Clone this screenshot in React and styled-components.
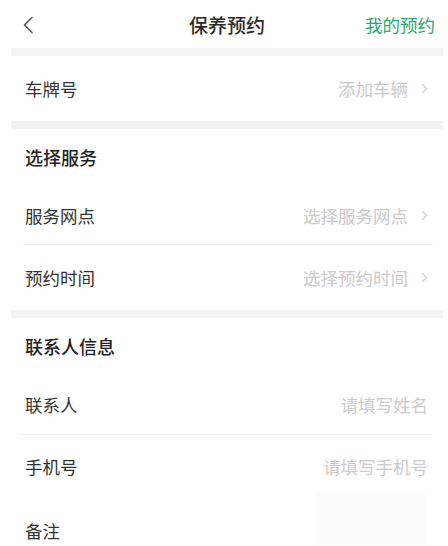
import React from 'react';
import styled, { createGlobalStyle } from 'styled-components';

const GlobalStyle = createGlobalStyle`
  body {
    margin: 0;
    background: #fff;
    font-family: "Noto Sans CJK SC", "Noto Sans", sans-serif;
  }
`;

function App() {
  return (
    <Page>
      <GlobalStyle />
      <Header>
        <BackButton>
          <svg width="12" height="18" viewBox="0 0 12 18">
            <polyline points="10,1.5 2.5,9 10,16.5" fill="none" stroke="#555" strokeWidth="1.6" strokeLinejoin="round" strokeLinecap="round" />
          </svg>
        </BackButton>
        <Title>保养预约</Title>
        <HeaderLink>我的预约</HeaderLink>
      </Header>
      <Band />
      <Row $h={65}>
        <Label>车牌号</Label>
        <Value>添加车辆<Chevron /></Value>
      </Row>
      <Band />
      <SectionTitle>选择服务</SectionTitle>
      <Row $h={60} $divider>
        <Label>服务网点</Label>
        <Value>选择服务网点<Chevron /></Value>
      </Row>
      <Row $h={65}>
        <Label>预约时间</Label>
        <Value>选择预约时间<Chevron /></Value>
      </Row>
      <Band />
      <SectionTitle>联系人信息</SectionTitle>
      <Row $h={61} $divider>
        <Label>联系人</Label>
        <Value $plain>请填写姓名</Value>
      </Row>
      <Row $h={62}>
        <Label>手机号</Label>
        <Value $plain>请填写手机号</Value>
      </Row>
      <Row $h={66}>
        <Label>备注</Label>
        <NoteBox />
      </Row>
    </Page>
  );
}

function Chevron() {
  return (
    <ChevronIcon width="7" height="11" viewBox="0 0 7 11">
      <polyline points="1.5,1.5 5.5,5.5 1.5,9.5" fill="none" stroke="#cfcfcf" strokeWidth="1.3" strokeLinecap="round" strokeLinejoin="round" />
    </ChevronIcon>
  );
}

export default App;

const Page = styled.div`
  width: 448px;
  height: 546px;
  overflow: hidden;
  background: #fff;
`;
const Header = styled.div`
  height: 48px;
  display: flex;
  align-items: center;
  justify-content: space-between;
  padding: 0 13px 0 22px;
  position: relative;
`;
const BackButton = styled.div`
  width: 14px;
  display: flex;
  align-items: center;
  padding-top: 2px;
`;
const Title = styled.div`
  position: absolute;
  left: 0;
  right: 0;
  text-align: center;
  padding-left: 6px;
  font-size: 19px;
  color: #2a2a2a;
  font-weight: 500;
  pointer-events: none;
`;
const HeaderLink = styled.div`
  font-size: 17.5px;
  color: #2aa873;
`;
const Band = styled.div`
  height: 8px;
  margin: 0 5px 0 11px;
  background: #f3f3f3;
`;
const SectionTitle = styled.div`
  height: 56px;
  display: flex;
  align-items: center;
  padding-left: 25px;
  font-size: 18px;
  font-weight: 500;
  color: #222;
`;
const Row = styled.div`
  height: ${p => p.$h}px;
  box-sizing: border-box;
  display: flex;
  align-items: center;
  justify-content: space-between;
  padding: 0 20px 0 25px;
  position: relative;
  &::after {
    content: '';
    display: ${p => (p.$divider ? 'block' : 'none')};
    position: absolute;
    left: 18px;
    right: 15px;
    bottom: 0;
    height: 1px;
    background: #f2f2f2;
  }
`;
const Label = styled.div`
  font-size: 17.5px;
  color: #333;
`;
const Value = styled.div`
  display: flex;
  align-items: center;
  gap: 13px;
  font-size: 17.5px;
  color: #cbcbcb;
  padding-right: ${p => (p.$plain ? '0' : '0')};
`;
const ChevronIcon = styled.svg`
  display: block;
`;
const NoteBox = styled.div`
  width: 108px;
  height: 49px;
  margin-right: 3px;
  margin-top: -24px;
  background: #fbfbfb;
  box-shadow: 0 0 6px 2px #fcfcfc;
`;
